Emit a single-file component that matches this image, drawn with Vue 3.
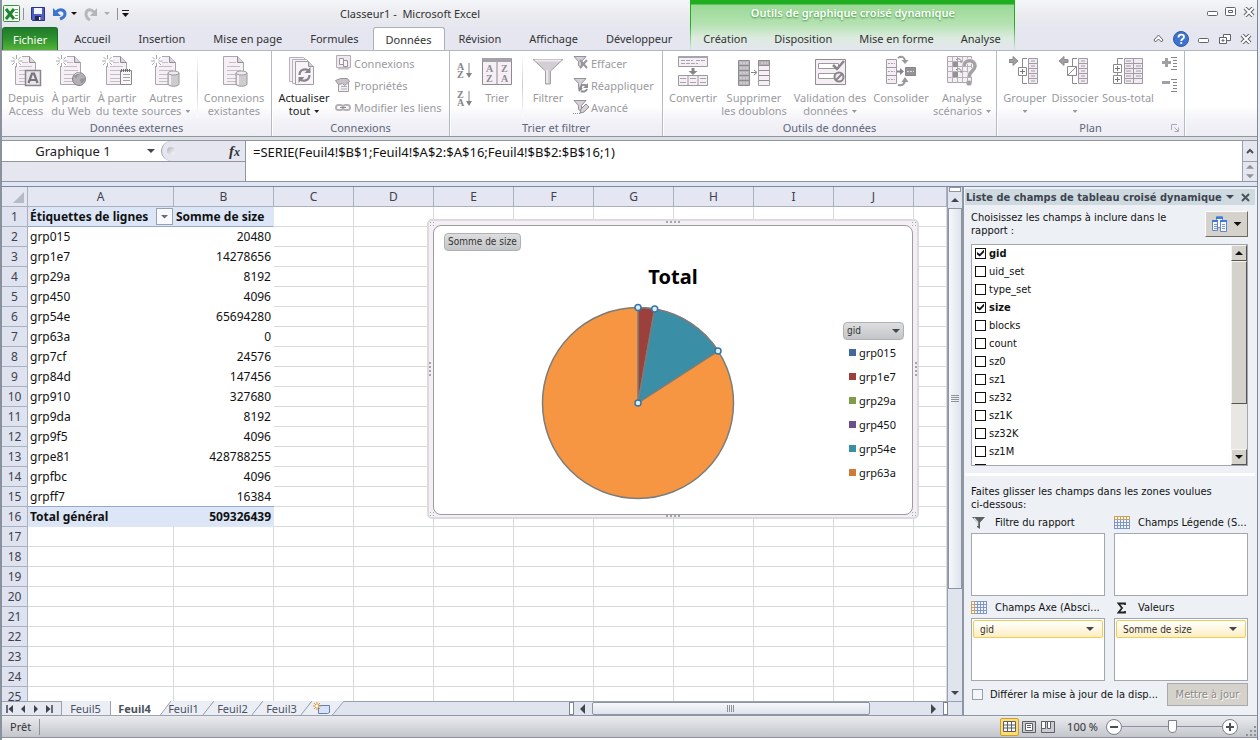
<script setup>
import { ref } from 'vue'

const page = '<path d="M5.500 1.500h14l6 6v22h-20z" fill="#f6f0f6" stroke="#aaa6ac"/><path d="M19.500 1.500v6h6" fill="#d9d4db" stroke="#8f8c92"/><path d="M11 7.500h7M9 11.500h13M9 15.500h14M9 19.500h14M9 23.500h14M9 26.500h14" stroke="#c4bfc7"/>'
const spark = '<rect x="2" y="1" width="10" height="10" fill="#fff"/><path d="M6.500 0v4M6.500 8v4M1 6h4M8.500 6h4M2.500 2l2.500 2.500M8.500 7.500l2.500 2.500M10.500 2L8.500 4.500M4.500 7.500L2 10" stroke="#a9a6ab"/>'
const can = '<path d="M18 18v11c0 3 11 3 11 0v-11z" fill="#cfccd0" stroke="#9b989d"/><path d="M20 19v10.500" stroke="#f3f0f3" stroke-width="2"/><ellipse cx="23.500" cy="18" rx="5.500" ry="2" fill="#eeeaee" stroke="#9b989d"/>'
const tableGrid = '<path d="M19.500 3.500h9v25h-9z" fill="#f2e9f2" stroke="#a09ca3"/><path d="M20 8.500h8M20 13.500h8M20 18.500h8M20 23.500h8M22 6h4M22 11h4M22 16h4M22 21h4M22 26h4" stroke="#a09ca3"/>'
const funnelSmall = '<path d="M1 1.500h12L8.500 6.500v6l-3-2v-4z" fill="#d5d0d6" stroke="#949197"/>'

const icons = {
  access: page + spark + '<path d="M15.500 15.500h15v15h-15z" fill="#e9e5ea" stroke="#89868b" stroke-width="1.500"/><path d="M18.500 28L22 18.500h2L27.500 28M20 25h6" fill="none" stroke="#77747a" stroke-width="2.200"/>',
  web: page + spark + '<circle cx="24" cy="24" r="6.500" fill="#b4b1b6" stroke="#858288"/><path d="M19 21c2-3 4-3 6-2-1 2-3 1-3 3s-2 1-3-1zM25 25c1-2 3-2 5-1-1 3-3 5-4 4z" fill="#96939a"/><path d="M20 20c2-2 4-2 5-2" fill="none" stroke="#e4e1e6"/>',
  text: page + spark + '<path d="M19.500 15.500h11v14h-11z" fill="#faf7fa" stroke="#89868b"/><path d="M20 15.500h10" stroke="#6f6c72" stroke-width="3" stroke-dasharray="1 1"/><path d="M22 19.500h7M22 22.500h7M22 25.500h7" stroke="#a7a4a9"/>',
  other: page + spark + can,
  existing: page + can,
  refresh: '<path d="M1.500 2.500h14l3 3v21h-17z" fill="#f6f0f6" stroke="#b6b2b8"/><path d="M4.500 4.500h14l3 3v21h-17z" fill="#f6f0f6" stroke="#b6b2b8"/><path d="M7.500 6.500h13l5 5v18h-18z" fill="#f8f3f8" stroke="#a19ea4"/><path d="M20.500 6.500v5h5" fill="#d4cfd6" stroke="#99959b"/><path d="M11.500 20c0-6 7-7 9.500-4M21.500 20c0 6-7 7-9.500 4" fill="none" stroke="#88858b" stroke-width="2.200"/><path d="M22.500 12v6h-6zM10.500 28v-6h6z" fill="#88858b"/>',
  sort: '<path d="M1.500 3.500h29v26h-29z" fill="#f6eff6" stroke="#8e8b90"/><path d="M1.500 3h29v4h-29z" fill="#a6a3a8"/><path d="M16 7v22" stroke="#8e8b90"/><g fill="#8e8b90" font-family="Liberation Serif, serif" font-weight="700" font-size="10"><text x="5" y="17">A</text><text x="5" y="27">Z</text><text x="20" y="17">Z</text><text x="20" y="27">A</text></g>',
  filter: '<path d="M1 4.500h30L18.500 16v13h-5V16z" fill="#d2ced3" stroke="#a29fa4"/><path d="M2 4.500h28l-2 2H4z" fill="#eeeaee"/><path d="M15 15v13" stroke="#f3f0f3" stroke-width="1.500"/>',
  convert: '<path d="M1.500 1.500h29v10h-29z" fill="#f5eef5" stroke="#9c999f"/><path d="M1 2h30" stroke="#a8a5aa" stroke-width="2"/><path d="M4 5.500h12M19 5.500h9M4 8.500h17" stroke="#a8a5aa" stroke-dasharray="4 1"/><path d="M14.500 13h3v3h3l-4.500 4-4.500-4h3z" fill="#88858a"/><path d="M1.500 20.500h29v10h-29zM11 20.500v10M21 20.500v10" fill="#f5eef5" stroke="#9c999f"/><path d="M3 23.500h6M13 23.500h6M23 23.500h6M3 27.500h6M13 27.500h6M23 27.500h6" stroke="#a8a5aa"/>',
  dedupe: '<path d="M0.500 5.500h11v25h-11z" fill="#b9b5bb" stroke="#8f8c91"/><path d="M20.500 5.500h11v25h-11z" fill="#f6eff6" stroke="#a3a0a5"/><path d="M20.500 5.500h11v5h-11z" fill="#b4b1b6" stroke="#8f8c91"/><path d="M1 10.500h11M1 15.500h11M1 20.500h11M1 25.500h11M21 15.500h10M21 20.500h10M21 25.500h10" stroke="#8f8c91"/><path d="M2 8h8M2 13h8M2 18h8M2 23h8M2 28h8M23 8h7" stroke="#e3e0e4" stroke-dasharray="2 1"/><path d="M13 17.500h5M16 15l3 2.500-3 2.500" fill="none" stroke="#858288"/>',
  validate: '<path d="M1.500 4.500h30v25h-30z" fill="#f5eef5" stroke="#8f8c92"/><path d="M4.500 8.500h20v5h-20zM4.500 18.500h20v5h-20z" fill="#fff" stroke="#9d9aa0"/><path d="M19 10l4 4 7-8" fill="none" stroke="#89868b" stroke-width="2.500"/><circle cx="25" cy="22" r="4.500" fill="#f3edf3" stroke="#89868b" stroke-width="2"/><path d="M22 25l6-6" stroke="#89868b" stroke-width="2"/>',
  consolidate: '<path d="M1.500 4.500h10v24h-10zM1.500 12.500h10M1.500 20.500h10" fill="#f5eef5" stroke="#a09da2"/><path d="M3 8.500h7M3 16.500h7M3 24.500h7" stroke="#a8a5aa" stroke-dasharray="2 1"/><path d="M20.500 12.500h10v8h-10z" fill="#969398" stroke="#88858a"/><path d="M22 16.500h7" stroke="#ddd" stroke-dasharray="2 1"/><path d="M12 16.500h4" stroke="#88858a" stroke-width="2"/><path d="M15 13l4 3.500-4 3.500z" fill="#88858a"/><path d="M13 3c4-3 7 0 7 3M13 30c4 1 7-1 7-5" fill="none" stroke="#9a979c" stroke-width="2"/><path d="M16.500 5h7L20 9zM16.500 27h7L20 22z" fill="#9a979c"/>',
  analysis: '<path d="M1.500 1.500h24v26h-24z" fill="#f5eef5" stroke="#aaa7ac"/><path d="M1.500 6.500h24M1.500 11.500h24M1.500 16.500h24M1.500 22.500h24M6.500 1.500v26M11.500 1.500v26M16.500 1.500v26M21.500 1.500v26" stroke="#b7b4b9"/><path d="M7 7h5v5H7zM7 17h5v5H7z" fill="#949196"/><path d="M10 5c3-3 6 0 5 3M10 15c3-3 6 0 5 3" fill="none" stroke="#88858a"/><path d="M18 11c0-7 11-7 11 0 0 5-6 5-6 11" fill="none" stroke="#f7f3f7" stroke-width="5"/><path d="M18 11c0-7 11-7 11 0 0 5-6 5-6 11" fill="none" stroke="#a4a1a6" stroke-width="3.500"/><circle cx="23" cy="28" r="2.600" fill="#a4a1a6"/>',
  group: '<path d="M0 4.500h4v-3l5 4.500-5 4.500v-3H0z" fill="#a29fa4" stroke="#8d8a8f"/><path d="M18 3.500h-4.500v25H18" fill="none" stroke="#8d8a8f"/><path d="M9.500 12.500h8v8h-8z" fill="#fff" stroke="#8d8a8f"/><path d="M11 16.500h5M13.500 14v5" stroke="#77747a"/>' + tableGrid,
  ungroup: '<path d="M9 4.500H5v-3L0 6l5 4.500v-3h4z" fill="#a29fa4" stroke="#8d8a8f"/><path d="M18 3.500h-4.500v25H18" fill="none" stroke="#8d8a8f"/><path d="M8.500 11.500h9v9h-9zM8.500 20.500l9-9" fill="#fff" stroke="#8d8a8f"/>' + tableGrid,
  subtotal: '<path d="M12.500 3.500h18v25h-18z" fill="#f2e9f2" stroke="#a09ca3"/><path d="M21.500 3.500v25M12.500 8.500h18M12.500 13.500h18M12.500 18.500h18M12.500 23.500h18M14 6h5M14 11h5M14 16h5M14 21h5M14 26h5M24 11h5M24 16h5M24 21h5" stroke="#a09ca3"/><path d="M11 3.500H5.500V9M5.500 17v4" fill="none" stroke="#8d8a8f"/><path d="M1.500 9.500h8v8h-8zM1.500 20.500h8v8h-8z" fill="#fff" stroke="#8d8a8f"/><path d="M3 13.500h5M5.500 11v5M3 24.500h5M5.500 22v5" stroke="#77747a"/>',
}
const smallIcons = {
  connections: '<path d="M1.500 .5h14v12h-14z" fill="#eee9ee" stroke="#b2afb4"/><path d="M4.500 3.500h4v6h-4zM8.500 5.500h4v6h-4z" fill="#f7f3f7" stroke="#99969b"/><path d="M3 13.500h11" stroke="#c5c2c7" stroke-width="2"/>',
  properties: '<path d="M3.500 5.500h10v9h-10z" fill="#f4eff4" stroke="#a09da2"/><path d="M6 9.500h6M6 12h6" stroke="#b0adb2"/><path d="M.5 3.500l5-2h7l2 3-5 4-2-2-4 1z" fill="#c6c3c8" stroke="#98959a"/>',
  links: '<rect x="1" y="6" width="7" height="5" rx="2.500" fill="none" stroke="#b5b2b7" stroke-width="2"/><rect x="8" y="6" width="7" height="5" rx="2.500" fill="none" stroke="#b5b2b7" stroke-width="2"/><path d="M5 8.500h6" stroke="#918e93"/>',
  clear: funnelSmall + '<path d="M7 5l7 8M14 5l-7 8" stroke="#9a979c" stroke-width="2"/>',
  reapply: funnelSmall + '<path d="M7 12c1-5 5-5 7-3M14 12c-1 3-4 3-6 2" fill="none" stroke="#8f8c91" stroke-width="2"/><path d="M15 6v5h-5zM5 11h5l-4 4z" fill="#8f8c91"/>',
  advanced: funnelSmall + '<path d="M7 14l1-4 5-5 3 3-5 5z" fill="#d6d2d7" stroke="#8f8c91"/><path d="M0 14.500h8" stroke="#8f8c91" stroke-dasharray="1 1"/>',
}

const dataTools = [
  { icon: 'convert', lines: ['Convertir'], size: 'w56' },
  { icon: 'dedupe', lines: ['Supprimer', 'les doublons'], size: 'w66' },
  { icon: 'validate', lines: ['Validation des', 'données'], arrow: true, size: 'w86' },
  { icon: 'consolidate', lines: ['Consolider'], size: 'w56' },
  { icon: 'analysis', lines: ['Analyse', 'scénarios'], arrow: true, size: 'w66' },
]
const external = [
  { icon: 'access', lines: ['Depuis', 'Access'], size: 'w44' },
  { icon: 'web', lines: ['À partir', 'du Web'], size: 'w46' },
  { icon: 'text', lines: ['À partir', 'du texte'], size: 'w46' },
  { icon: 'other', lines: ['Autres', 'sources'], arrow: true, size: 'w52' },
]
const outline = [
  { icon: 'group', lines: ['Grouper', ''], arrow: true, size: 'w50' },
  { icon: 'ungroup', lines: ['Dissocier', ''], arrow: true, size: 'w50' },
  { icon: 'subtotal', lines: ['Sous-total'], size: 'w56' },
]
const tabs = ['Accueil', 'Insertion', 'Mise en page', 'Formules', 'Données', 'Révision', 'Affichage', 'Développeur']
const chartTabs = ['Création', 'Disposition', 'Mise en forme', 'Analyse']

const columns = ['A', 'B', 'C', 'D', 'E', 'F', 'G', 'H', 'I', 'J', '']
const data = [
  ['Étiquettes de lignes', 'Somme de size'],
  ['grp015', '20480'], ['grp1e7', '14278656'], ['grp29a', '8192'], ['grp450', '4096'],
  ['grp54e', '65694280'], ['grp63a', '0'], ['grp7cf', '24576'], ['grp84d', '147456'],
  ['grp910', '327680'], ['grp9da', '8192'], ['grp9f5', '4096'], ['grpe81', '428788255'],
  ['grpfbc', '4096'], ['grpff7', '16384'], ['Total général', '509326439'],
]
const legend = [
  ['grp015', 'blue'], ['grp1e7', 'red'], ['grp29a', 'green'],
  ['grp450', 'purple'], ['grp54e', 'teal'], ['grp63a', 'orange'],
]
const fields = ref([
  { name: 'gid', on: true }, { name: 'uid_set', on: false }, { name: 'type_set', on: false },
  { name: 'size', on: true }, { name: 'blocks', on: false }, { name: 'count', on: false },
  { name: 'sz0', on: false }, { name: 'sz1', on: false }, { name: 'sz32', on: false },
  { name: 'sz1K', on: false }, { name: 'sz32K', on: false }, { name: 'sz1M', on: false },
  { name: '', on: false },
])
const nameBox = ref('Graphique 1')
const formula = ref('=SERIE(Feuil4!$B$1;Feuil4!$A$2:$A$16;Feuil4!$B$2:$B$16;1)')
const zoom = ref(50)
const defer = ref(false)
const sheets = ['Feuil5', 'Feuil4', 'Feuil1', 'Feuil2', 'Feuil3']
</script>

<template>
  <div class="app">
    <header class="top">
      <div class="titlebar">
        <div class="quick">
          <svg class="xl" width="18" height="18" viewBox="0 0 18 18"><rect x=".5" y=".5" width="16" height="16" rx="1" fill="#e9f5e6" stroke="#3c8f3c" /><path d="M10 1h6v15h-6z" fill="#fff" /><path d="M12 4.500h3M12 7.500h3M12 10.500h3M12 13.500h3" stroke="#5aa95a" /><path d="M3 4l8 10M11 4L3 14" stroke="#1e8230" stroke-width="3" /></svg>
          <span class="bar"></span>
          <button class="plain" aria-label="Enregistrer"><svg width="14" height="14" viewBox="0 0 14 14"><path d="M.5 .5h13v13h-12l-1-1z" fill="#4f5fc4" stroke="#2b3385" /><path d="M3 1h8v6H3z" fill="#f3f5fd" /><path d="M4 9h6v4H4z" fill="#23275c" /><path d="M8 10h1.500v3H8z" fill="#fff" /></svg></button>
          <button class="plain undo" aria-label="Annuler"><svg width="14" height="14" viewBox="0 0 14 14"><path d="M3 5c4-4 9-2 9 2 0 3-2 4-5 5" fill="none" stroke="#3b74cf" stroke-width="3" /><path d="M0 1v8h8z" fill="#3b74cf" /></svg></button>
          <i class="tri dark"></i>
          <button class="plain redo" aria-label="Répéter"><svg width="14" height="14" viewBox="0 0 14 14"><path d="M10 5C6 1 2 3 2 7c0 3 2 5 4 6" fill="none" stroke="#b6b8bc" stroke-width="3" /><path d="M13 1v8H6z" fill="#b2b5b9" /></svg></button>
          <i class="tri grey"></i>
          <span class="bar last"></span>
          <svg width="7" height="8" viewBox="0 0 7 8"><path d="M0 .5h7" stroke="#222" /><path d="M0 3h7L3.500 7z" fill="#111" /></svg>
        </div>
        <h1>Classeur1 -&nbsp; Microsoft Excel</h1>
        <div class="winbtns">
          <button class="plain" aria-label="Réduire"><svg width="12" height="10" viewBox="0 0 12 10"><rect x=".5" y="4.500" width="10" height="4" rx="1" fill="#fff" stroke="#5e636d" /></svg></button>
          <button class="plain" aria-label="Restaurer"><svg width="12" height="10" viewBox="0 0 12 10"><rect x=".5" y=".5" width="10" height="8" rx="1" fill="#fff" stroke="#5e636d" /><path d="M3.500 3.500h4v2h-4z" fill="#fff" stroke="#5e636d" /></svg></button>
          <button class="plain" aria-label="Fermer"><svg width="12" height="10" viewBox="0 0 12 10"><path d="M2 1l8 8M10 1L2 9" stroke="#5e636d" stroke-width="4" /><path d="M2 1l8 8M10 1L2 9" stroke="#fff" stroke-width="2" /></svg></button>
        </div>
      </div>
      <nav class="tabs">
        <button class="file">Fichier</button>
        <button v-for="t in tabs" :key="t" class="tab" :class="{ active: t === 'Données' }">{{ t }}</button>
        <div class="context">
          <div class="ctitle">Outils de graphique croisé dynamique</div>
          <button v-for="t in chartTabs" :key="t" class="tab">{{ t }}</button>
        </div>
        <div class="tabtools">
          <button class="plain" aria-label="Réduire le ruban"><svg width="11" height="9" viewBox="0 0 11 9"><path d="M1 6l4.500-5L10 6l-1.500 2-3-3-3 3z" fill="#fff" stroke="#5e636d" /></svg></button>
          <button class="plain" aria-label="Aide"><svg width="16" height="16" viewBox="0 0 16 16"><circle cx="8" cy="8" r="7.500" fill="#3d73cf" stroke="#2d58a8" /><path d="M5.500 6.500c0-4 5.500-3.500 5.500-.5 0 2-2.800 2-2.800 4" fill="none" stroke="#fff" stroke-width="1.800" /><circle cx="8.200" cy="12" r="1.100" fill="#fff" /></svg></button>
          <button class="plain" aria-label="Réduire le classeur"><svg width="12" height="10" viewBox="0 0 12 10"><rect x=".5" y="4.500" width="10" height="4" rx="1" fill="#fff" stroke="#5e636d" /></svg></button>
          <button class="plain" aria-label="Restaurer le classeur"><svg width="12" height="12" viewBox="0 0 12 12"><path d="M4.500 1.500h7v6h-7z" fill="#fff" stroke="#5e636d" /><path d="M.5 4.500h7v6h-7zM3 7h2v1H3z" fill="#fff" stroke="#5e636d" /></svg></button>
          <button class="plain" aria-label="Fermer le classeur"><svg width="12" height="10" viewBox="0 0 12 10"><path d="M2 1l8 8M10 1L2 9" stroke="#5e636d" stroke-width="4" /><path d="M2 1l8 8M10 1L2 9" stroke="#fff" stroke-width="2" /></svg></button>
        </div>
      </nav>
    </header>

    <section class="ribbon">
      <div class="rgroup g-ext">
        <div class="rbody">
          <button v-for="b in external" :key="b.icon" class="big" :class="b.size">
            <svg width="32" height="32" viewBox="0 0 32 32" v-html="icons[b.icon]"></svg>
            <span v-for="(l, i) in b.lines" :key="i">{{ l }}<i v-if="b.arrow && i === 1" class="tri mini"></i></span>
          </button>
          <span class="rsep"></span>
          <button class="big w68">
            <svg width="32" height="32" viewBox="0 0 32 32" v-html="icons.existing"></svg>
            <span>Connexions</span><span>existantes</span>
          </button>
        </div>
        <div class="rlabel">Données externes</div>
      </div>
      <div class="rgroup g-con">
        <div class="rbody">
          <button class="big w56 enabled">
            <svg width="32" height="32" viewBox="0 0 32 32" v-html="icons.refresh"></svg>
            <span>Actualiser</span><span>tout<i class="tri mini"></i></span>
          </button>
          <div class="smalls">
            <button><svg width="16" height="16" viewBox="0 0 16 16" v-html="smallIcons.connections"></svg>Connexions</button>
            <button><svg width="16" height="16" viewBox="0 0 16 16" v-html="smallIcons.properties"></svg>Propriétés</button>
            <button><svg width="16" height="16" viewBox="0 0 16 16" v-html="smallIcons.links"></svg>Modifier les liens</button>
          </div>
        </div>
        <div class="rlabel">Connexions</div>
      </div>
      <div class="rgroup g-sort">
        <div class="rbody">
          <div class="azcol">
            <button class="plain az" aria-label="Trier de A à Z"><span>A<br>Z</span><svg width="6" height="16" viewBox="0 0 6 16"><path d="M3 0v12" stroke="#858288" /><path d="M0 10h6l-3 5z" fill="#858288" /></svg></button>
            <button class="plain az" aria-label="Trier de Z à A"><span>Z<br>A</span><svg width="6" height="16" viewBox="0 0 6 16"><path d="M3 0v12" stroke="#858288" /><path d="M0 10h6l-3 5z" fill="#858288" /></svg></button>
          </div>
          <button class="big w44"><svg width="32" height="32" viewBox="0 0 32 32" v-html="icons.sort"></svg><span>Trier</span></button>
          <span class="rsep"></span>
          <button class="big w46"><svg width="32" height="32" viewBox="0 0 32 32" v-html="icons.filter"></svg><span>Filtrer</span></button>
          <div class="smalls tight">
            <button><svg width="16" height="16" viewBox="0 0 16 16" v-html="smallIcons.clear"></svg>Effacer</button>
            <button><svg width="16" height="16" viewBox="0 0 16 16" v-html="smallIcons.reapply"></svg>Réappliquer</button>
            <button><svg width="16" height="16" viewBox="0 0 16 16" v-html="smallIcons.advanced"></svg>Avancé</button>
          </div>
        </div>
        <div class="rlabel">Trier et filtrer</div>
      </div>
      <div class="rgroup g-tools">
        <div class="rbody">
          <button v-for="b in dataTools" :key="b.icon" class="big" :class="b.size">
            <svg width="32" height="32" viewBox="0 0 32 32" v-html="icons[b.icon]"></svg>
            <span v-for="(l, i) in b.lines" :key="i">{{ l }}<i v-if="b.arrow && i === 1" class="tri mini"></i></span>
          </button>
        </div>
        <div class="rlabel">Outils de données</div>
      </div>
      <div class="rgroup g-plan">
        <div class="rbody">
          <button v-for="b in outline" :key="b.icon" class="big" :class="b.size">
            <svg width="32" height="32" viewBox="0 0 32 32" v-html="icons[b.icon]"></svg>
            <span v-for="(l, i) in b.lines" :key="i">{{ l }}<i v-if="b.arrow && i === 1" class="tri mini alone"></i></span>
          </button>
          <div class="details">
            <button class="plain" aria-label="Afficher les détails"><svg width="16" height="14" viewBox="0 0 16 14"><path d="M3 1h3v3h3v3H6v3H3V7H0V4h3z" fill="#a29fa4" /><path d="M9 .5h6M11 3.500h4M11 6.500h4M11 9.500h4M9 12.500h6" stroke="#88858a" /></svg></button>
            <button class="plain" aria-label="Masquer"><svg width="16" height="14" viewBox="0 0 16 14"><path d="M0 2h8v3H0z" fill="#a29fa4" /><path d="M9 .5h6M11 3.500h4M11 6.500h4M11 9.500h4M9 12.500h6" stroke="#88858a" /></svg></button>
          </div>
        </div>
        <div class="rlabel">Plan<svg class="launch" width="8" height="8" viewBox="0 0 8 8"><path d="M.5 6V.5H6M3.500 3.500L7 7M7.500 3.500v4h-4" fill="none" stroke="#a7abb3" /></svg></div>
      </div>
    </section>

    <section class="fbar">
      <div class="fleft">
        <div class="fname">
          <input v-model="nameBox" aria-label="Zone Nom">
          <i class="tri namearrow"></i>
          <div class="knob"><i></i><span class="fx">f<small>x</small></span></div>
        </div>
      </div>
      <textarea v-model="formula" class="formula" aria-label="Barre de formule" spellcheck="false"></textarea>
      <div class="fscroll">
        <button class="plain" aria-label="Réduire la barre"><svg width="8" height="6" viewBox="0 0 8 6"><path d="M1 5l3-3 3 3" fill="none" stroke="#4c515a" stroke-width="2" /></svg></button>
        <div class="spins"><i class="tri up"></i><i class="tri"></i></div>
      </div>
    </section>

    <main class="work">
      <div class="book">
        <div class="gridrow">
          <div class="sheet">
            <table>
              <colgroup><col class="c-head"><col class="c-a"><col class="c-b"><col v-for="n in 8" :key="n" class="c-n"><col></colgroup>
              <thead>
                <tr><th class="corner"><svg width="11" height="11" viewBox="0 0 11 11"><path d="M11 0v11H0z" fill="#b4bac6" /></svg></th><th v-for="(c, i) in columns" :key="i">{{ c }}</th></tr>
              </thead>
              <tbody>
                <tr v-for="r in 25" :key="r" :class="{ headrow: r === 1, totalrow: r === 16, pivot: r <= 16 }">
                  <th>{{ r }}</th>
                  <td class="ca">{{ data[r - 1]?.[0] }}<button v-if="r === 1" class="dd" aria-label="Filtrer les étiquettes"><i class="tri"></i></button></td>
                  <td class="cb">{{ data[r - 1]?.[1] }}</td>
                  <td v-for="n in 9" :key="n"></td>
                </tr>
              </tbody>
            </table>
            <div class="chart">
              <div class="plot">
                <button class="fieldbtn">Somme de size</button>
                <h2>Total</h2>
                <svg class="pie" width="200" height="200" viewBox="0 0 200 200">
                  <circle cx="100" cy="100" r="95.500" fill="#f79642" stroke="#7b7d7a" stroke-width="1.500" />
                  <path d="M100 100V4.500A95.500 95.500 0 0 1 116.700 6z" fill="#9b403b" stroke="#7b7d7a" stroke-width="1.500" />
                  <path d="M100 100L116.700 6A95.500 95.500 0 0 1 180.200 48z" fill="#3a8ea6" stroke="#7b7d7a" stroke-width="1.500" />
                  <g fill="#d3f2fb" stroke="#3a73a8" stroke-width="1.500"><circle cx="100" cy="4.500" r="3" /><circle cx="116.700" cy="6" r="3" /><circle cx="180" cy="48" r="3" /><circle cx="100" cy="100" r="3" /></g>
                </svg>
                <div class="legend">
                  <button class="fieldbtn gid">gid<i class="tri"></i></button>
                  <ul><li v-for="l in legend" :key="l[0]"><i :class="l[1]"></i>{{ l[0] }}</li></ul>
                </div>
              </div>
              <i class="grip t"></i><i class="grip b"></i><i class="grip v l"></i><i class="grip v r"></i>
              <i class="dots tl"></i><i class="dots tr"></i><i class="dots bl"></i><i class="dots br"></i>
            </div>
          </div>
          <div class="vscroll">
            <i class="split"></i>
            <i class="tri up"></i>
            <div class="vthumb"><i></i></div>
            <i class="tri"></i>
          </div>
        </div>
        <div class="bottom">
          <div class="navs">
            <button class="plain" aria-label="Première"><svg width="8" height="8" viewBox="0 0 8 8"><path d="M1 0v8" stroke="#3d434e" stroke-width="1.500" /><path d="M7 0v8L2.500 4z" fill="#3d434e" /></svg></button>
            <button class="plain" aria-label="Précédente"><svg width="8" height="8" viewBox="0 0 8 8"><path d="M6 0v8L2 4z" fill="#3d434e" /></svg></button>
            <button class="plain" aria-label="Suivante"><svg width="8" height="8" viewBox="0 0 8 8"><path d="M2 0v8l4-4z" fill="#3d434e" /></svg></button>
            <button class="plain" aria-label="Dernière"><svg width="8" height="8" viewBox="0 0 8 8"><path d="M7 0v8" stroke="#3d434e" stroke-width="1.500" /><path d="M1 0v8l4.500-4z" fill="#3d434e" /></svg></button>
          </div>
          <div class="sheettabs">
            <button v-for="(s, i) in sheets" :key="s" class="stab" :class="{ current: i === 1 }">
              <svg width="62" height="15" viewBox="0 0 62 15"><path :d="i < 2 ? 'M.500 0V14.500H50L61 0' : 'M12 0L.500 14.500H50L61 0'" :fill="i === 1 ? '#fff' : '#eceef5'" stroke="#9aa2b0" /></svg>
              <span>{{ s }}</span>
            </button>
            <button class="stab new" aria-label="Insérer une feuille">
              <svg width="62" height="15" viewBox="0 0 62 15"><path d="M12 0L.500 14.500H32L44 0" fill="#eceef5" stroke="#9aa2b0" /><path d="M18.500 4.500h11v7l-2 1h-9z" fill="#d5e2f8" stroke="#6a80b5" /><path d="M17 1v8M13 5h8M14 2l6 6M20 2l-6 6" stroke="#e2932c" /><circle cx="17" cy="5" r="1.500" fill="#fff" /></svg>
            </button>
          </div>
          <div class="hscroll">
            <i class="hsplit"></i>
            <svg width="8" height="10" viewBox="0 0 8 10"><path d="M6 0v10L1 5z" fill="#42464e" /></svg>
            <div class="htrack"><div class="hthumb"><i></i></div></div>
            <svg width="8" height="10" viewBox="0 0 8 10"><path d="M1 0v10l5-5z" fill="#42464e" /></svg>
            <i class="hsplit"></i>
          </div>
        </div>
      </div>

      <aside class="panel">
        <div class="ptitle"><strong>Liste de champs de tableau croisé dynamique</strong><i class="tri"></i><button class="plain" aria-label="Fermer le volet"><svg width="9" height="9" viewBox="0 0 9 9"><path d="M1 1l7 7M8 1L1 8" stroke="#4d545e" stroke-width="2" /></svg></button></div>
        <div class="pbody">
          <div class="choose">
            <p>Choisissez les champs à inclure dans le rapport :</p>
            <button class="layoutbtn" aria-label="Disposition du volet">
              <svg width="15" height="16" viewBox="0 0 15 16"><path d="M4.500 .5h6v11h-6z" fill="#fff" stroke="#6a93dd" /><path d="M4 1h7v2H4z" fill="#3f78dd" /><path d="M.5 4.500h5v10h-5zM8.500 4.500h6v11h-6z" fill="#f5f9ff" stroke="#5d85cf" /><path d="M0 5h6M8 5h7" stroke="#3f78dd" stroke-width="2" /><path d="M2 8.500h3M2 10.500h3M2 12.500h3M10 8.500h3M10 10.500h3M10 12.500h3" stroke="#7f95bd" /></svg>
              <i class="tri black"></i>
            </button>
          </div>
          <div class="fieldbox">
            <ul>
              <li v-for="(f, i) in fields" :key="i"><label :class="{ on: f.on }"><input v-model="f.on" type="checkbox">{{ f.name }}</label></li>
            </ul>
            <div class="lscroll"><b><i class="tri up"></i></b><div class="lthumb"></div><span></span><b><i class="tri"></i></b></div>
          </div>
        </div>
        <div class="pdiv"></div>
        <div class="pbody zones">
          <p>Faites glisser les champs dans les zones voulues<br>ci-dessous:</p>
          <div class="zonegrid">
            <section>
              <h3><svg width="16" height="14" viewBox="0 0 16 14"><path d="M1 1h13L9 6.500V13l-3-2V6.500z" fill="#5d5f63" /><path d="M3 2l3.500 4v4" fill="none" stroke="#e0e0e2" stroke-width="1.500" /></svg>Filtre du rapport</h3>
              <div class="drop"></div>
            </section>
            <section>
              <h3><svg width="16" height="13" viewBox="0 0 16 13"><path d="M0 0h16v13H0z" fill="#7d97c8" /><path d="M0 0h16v4H0z" fill="#c9a15c" /><path d="M1 2h15M1 5h15M1 8h15M1 11h15" stroke="#f2f5fc" stroke-width="2" stroke-dasharray="2 1" /></svg>Champs Légende (S...</h3>
              <div class="drop"></div>
            </section>
            <section>
              <h3><svg width="16" height="13" viewBox="0 0 16 13"><path d="M0 0h16v13H0z" fill="#7d97c8" /><path d="M0 0h4v13H0z" fill="#c9a15c" /><path d="M1 2h15M1 5h15M1 8h15M1 11h15" stroke="#f2f5fc" stroke-width="2" stroke-dasharray="2 1" /></svg>Champs Axe (Absci...</h3>
              <div class="drop"><button class="chip">gid<i class="tri"></i></button></div>
            </section>
            <section>
              <h3><svg width="16" height="14" viewBox="0 0 16 14"><path d="M11 4V2.500H4.500L8 7l-3.500 4.500H11V10" fill="none" stroke="#222" stroke-width="1.800" /></svg>Valeurs</h3>
              <div class="drop"><button class="chip">Somme de size<i class="tri"></i></button></div>
            </section>
          </div>
          <div class="update">
            <label><input v-model="defer" type="checkbox">Différer la mise à jour de la disp...</label>
            <button disabled>Mettre à jour</button>
          </div>
        </div>
      </aside>
    </main>

    <footer class="status">
      <span class="ready">Prêt</span>
      <div class="views">
        <button class="plain sel" aria-label="Normal"><svg width="13" height="11" viewBox="0 0 13 11"><path d="M.5 .5h12v10H.5zM.5 4h12M.5 7h12M4.500 .5v10M8.500 .5v10" fill="#fff" stroke="#5c5f66" /></svg></button>
        <button class="plain" aria-label="Mise en page"><svg width="14" height="12" viewBox="0 0 14 12"><path d="M.5 .5h13v11H.5z" fill="#c9ccd2" stroke="#5c5f66" /><path d="M3.500 2.500h7v7h-7zM5 4.500h4M5 6.500h4" fill="#fff" stroke="#5c5f66" /></svg></button>
        <button class="plain" aria-label="Aperçu des sauts de page"><svg width="14" height="12" viewBox="0 0 14 12"><path d="M.5 .5h13v11H.5z" fill="#c9ccd2" stroke="#5c5f66" /><path d="M.5 .5h4v7h-4zM6.500 .5h3v7h-3z" fill="#fff" stroke="#5c5f66" /></svg></button>
      </div>
      <span class="pct">100 %</span>
      <button class="plain round" aria-label="Zoom arrière"><svg width="16" height="16" viewBox="0 0 16 16"><circle cx="8" cy="8" r="7.500" fill="#fff" stroke="#7b818b" /><path d="M4 8h8" stroke="#4a4f58" stroke-width="2" /></svg></button>
      <input v-model="zoom" type="range" min="0" max="100" aria-label="Zoom">
      <button class="plain round" aria-label="Zoom avant"><svg width="16" height="16" viewBox="0 0 16 16"><circle cx="8" cy="8" r="7.500" fill="#fff" stroke="#7b818b" /><path d="M4 8h8M8 4v8" stroke="#4a4f58" stroke-width="2" /></svg></button>
      <svg class="grab" width="12" height="12" viewBox="0 0 12 12"><path d="M9 1h2v2H9zM5 5h2v2H5zM9 5h2v2H9zM1 9h2v2H1zM5 9h2v2H5zM9 9h2v2H9z" fill="#8c929c" /></svg>
    </footer>
  </div>
</template>

<style>
body { margin: 0; background: #e6ebf5; }
</style>

<style scoped>
* { box-sizing: border-box; }
.app { height: 100vh; display: flex; flex-direction: column; padding: 0 3px 2px 1px; font: 11px/13px "Noto Sans", "Open Sans", sans-serif; color: #333; background: linear-gradient(90deg, #8a929e 2px, #fff 2px, #fff calc(100% - 3px), #7f8896 calc(100% - 3px), #7f8896 calc(100% - 2px), #e6ebf5 calc(100% - 2px)); overflow: hidden; }
.app > * { margin-left: 1px; }
button, input, textarea { font: inherit; color: inherit; margin: 0; }
button { border: 0; background: none; padding: 0; white-space: nowrap; }
ul { list-style: none; margin: 0; padding: 0; }
h1, h2, h3, p { margin: 0; font: inherit; }
svg { display: block; flex: none; }
.tri { display: inline-block; width: 8px; height: 4px; background: #42464e; clip-path: polygon(0 0, 100% 0, 50% 100%); flex: none; }
.tri.up { clip-path: polygon(50% 0, 100% 100%, 0 100%); }
.tri.black { background: #111; }
.tri.dark { background: #111; width: 6px; height: 3px; }
.tri.grey { background: #aaadb2; width: 6px; height: 3px; }
.tri.mini { width: 5px; height: 3px; background: currentColor; margin-left: 4px; vertical-align: 2px; }
.tri.alone { margin-left: 0; }

.top { background: linear-gradient(#f4f6fa, #ececef 14px, #e5e6ef 28px); flex: none; }
.titlebar { height: 27px; display: flex; align-items: center; position: relative; }
.quick { display: flex; align-items: center; width: 328px; padding-left: 1px; }
.bar { width: 1px; height: 12px; background: #8d929b; margin: 0 7px 0 2px; }
.bar.last { margin: 0 4px 0 7px; }
.undo { margin: 0 4px 0 8px; }
.redo { margin: 0 6px 0 7px; }
h1 { width: 160px; text-align: center; white-space: nowrap; }
.winbtns { margin-left: auto; display: flex; gap: 6px; padding: 0 2px 3px 0; }
.tabs { display: flex; align-items: flex-end; height: 23px; }
.file { height: 23px; padding: 0 10px; color: #fff; background: linear-gradient(#1f7a2c, #2f922c 50%, #56b33c); border-radius: 3px 3px 0 0; border: 1px solid #15702a; border-bottom: 0; margin-right: 2px; }
.tab { height: 23px; padding: 0 14px; }
.tab.active { background: #fff; border: 1px solid #a8b0ba; border-bottom: 0; border-radius: 3px 3px 0 0; padding: 0 12px; }
.context { position: relative; width: 325px; height: 50px; padding-top: 27px; margin-left: 4px; display: flex; background: linear-gradient(#1fae20 4px, #9ad996 5px, #b4e2b1 24px, #dcebdf 38px, #e5e6ef 50px); }
.context .tab { padding: 0 14px 0 13px; }
.context::before, .context::after { content: ""; position: absolute; top: 0; bottom: 0; width: 1px; background: linear-gradient(#1fae20 50%, #d5ead8); }
.context::before { left: 0; }
.context::after { right: 0; }
.ctitle { position: absolute; top: 6px; left: 0; right: 0; text-align: center; color: #fff; font-weight: 600; text-shadow: 0 1px 2px #3c8f3c; white-space: nowrap; }
.tabtools { margin-left: auto; height: 23px; display: flex; align-items: center; gap: 9px; padding-right: 5px; }

.ribbon { display: flex; flex: none; height: 87px; border-top: 1px solid #b0b8c1; border-bottom: 1px solid #8f969f; background: linear-gradient(#fff 55px, #f2f2f8 70px, #eeedf3); color: #9a9a9e; }
.rgroup { display: flex; flex-direction: column; border-right: 1px solid #b5bac3; box-shadow: 1px 0 #fff; flex: none; }
.g-ext { width: 270px; }
.g-con { width: 178px; }
.g-sort { width: 213px; }
.g-tools { width: 334px; }
.g-plan { width: 188px; }
.rbody { display: flex; height: 69px; padding: 4px 0 0 2px; }
.g-con .rbody { padding-left: 4px; }
.g-sort .rbody { padding-left: 5px; }
.g-plan .rbody { padding-left: 3px; }
.big { display: flex; flex-direction: column; align-items: center; }
.big svg { margin-bottom: 4px; }
.big span { height: 13px; display: block; }
.enabled { color: #222; }
.w44 { width: 44px; } .w46 { width: 46px; } .w50 { width: 50px; } .w52 { width: 52px; } .w56 { width: 56px; }
.w66 { width: 66px; } .w68 { width: 68px; } .w86 { width: 86px; }
.rsep { width: 1px; height: 62px; margin: 0 2px 0 5px; background: linear-gradient(#fff, #c9ccd4 50%, #fff); }
.g-sort .rsep { margin-left: 3px; }
.smalls { display: flex; flex-direction: column; padding-left: 3px; margin-top: -3px; }
.smalls button { display: flex; align-items: center; gap: 3px; height: 22px; }
.smalls svg { width: 16px; }
.smalls.tight { padding-left: 2px; }
.smalls.tight button { gap: 2px; }
.azcol { width: 20px; display: flex; flex-direction: column; padding: 8px 0 0 2px; gap: 12px; }
.az { display: flex; gap: 2px; text-align: left; font: 700 10px/8px "Liberation Serif", serif; color: #858288; }
.details { display: flex; flex-direction: column; gap: 8px; padding: 2px 0 0 6px; }
.rlabel { height: 17px; line-height: 17px; text-align: center; color: #5d6577; position: relative; }
.launch { position: absolute; right: 5px; top: 5px; }

.fbar { display: flex; flex: none; height: 50px; padding-top: 3px; border-bottom: 1px solid #7f8896; background: linear-gradient(#dcdfe4 3px, #8f969f 3px, #8f969f 4px, #e5e6f0 4px, #e5e6f0 44px, #8f969f 44px, #8f969f 45px, #dfe6f5 45px); }
.fleft { width: 244px; padding-top: 1px; border-right: 1px solid #8f969f; height: 42px; flex: none; }
.fname { display: flex; align-items: center; height: 21px; background: #fff; border-bottom: 1px solid #8f969f; }
.fname input { width: 142px; border: 0; background: none; text-align: center; font-size: 13px; padding: 0; outline: 0; height: 20px; color: #222; }
.namearrow { margin: 0 6px 0 3px; }
.knob { flex: 1; height: 20px; display: flex; align-items: center; justify-content: space-between; background: #e5e6f0; border-left: 1px solid #9aa0ab; border-radius: 10px 0 0 10px; padding: 0 5px; }
.knob i { width: 8px; height: 8px; border-radius: 50%; background: linear-gradient(135deg, #aeb2ba, #fff); }
.fx { font: italic 700 15px/16px "Liberation Serif", serif; color: #333; }
.fx small { font-size: 12px; }
.formula { flex: 1; min-width: 0; border: 0; outline: 0; resize: none; height: 40px; margin-top: 1px; padding: 2px 7px; font-size: 13px; line-height: 18px; color: #111; background: #fff; overflow: hidden; }
.fscroll { width: 15px; margin-top: 1px; height: 40px; border-left: 1px solid #9aa0ab; display: flex; flex-direction: column; align-items: center; background: #e5e6f0; flex: none; }
.fscroll button { height: 20px; }
.spins { border-top: 1px solid #9aa0ab; width: 100%; flex: 1; display: flex; flex-direction: column; align-items: center; justify-content: space-around; }
.spins .tri { background: #8b9398; }

.work { flex: 1; min-height: 0; display: flex; }
.book { flex: 1; min-width: 0; display: flex; flex-direction: column; }
.gridrow { flex: 1; min-height: 0; display: flex; }
.sheet { flex: 1; min-width: 0; position: relative; overflow: hidden; background: #fff; border-right: 1px solid #9aa2b0; }
table { table-layout: fixed; border-collapse: separate; border-spacing: 0; width: 100%; font-size: 12px; line-height: 18px; color: #111; }
.c-head { width: 26px; } .c-a { width: 146px; } .c-b { width: 100px; } .c-n { width: 80px; }
th { font-weight: 400; color: #3d4250; background: #dfe3ef; border-right: 1px solid #a9b0c0; border-bottom: 1px solid #a9b0c0; padding: 0; height: 20px; }
thead th { background: #e4e6f1; }
.corner svg { margin: 2px 3px 0 auto; }
td { height: 20px; padding: 0 2px; border-right: 1px solid #d9dade; border-bottom: 1px solid #d9dade; overflow: hidden; white-space: nowrap; }
.pivot .ca, .pivot .cb { border-bottom-color: #fff; }
.pivot .ca { border-right: 0; }
.pivot .cb { text-align: right; border-right-color: #fff; }
.headrow .ca, .headrow .cb, .totalrow .ca, .totalrow .cb { font-weight: 700; background: #dde6f7; border-bottom-color: #95a9cc; border-right-color: #dde6f7; }
.headrow .cb { text-align: left; padding-left: 2px; }
.totalrow .ca, .totalrow .cb { border-bottom-color: #dde6f7; box-shadow: 0 -1px #95a9cc; }
.ca { position: relative; }
.dd { position: absolute; right: 1px; top: 1px; width: 17px; height: 17px; border: 1px solid #9aa2b0; background: #f7f9fc; display: grid; place-items: center; }
.dd .tri { background: #666c76; }

.chart { position: absolute; left: 425px; top: 32px; width: 492px; height: 300px; border: 2px solid #dcdadf; border-radius: 5px; background: #f3eff4; padding: 4px; }
.plot { position: relative; height: 290px; background: #fff; border: 1px solid #9b9ba0; border-radius: 8px; }
.fieldbtn { position: absolute; left: 10px; top: 7px; height: 18px; padding: 0 3px; border: 1px solid #aeb0b4; border-radius: 4px; background: linear-gradient(#dededf, #c4c5c8); font: 10px/14px "DejaVu Sans Condensed", "DejaVu Sans", sans-serif; color: #333; }
h2 { position: absolute; left: 0; right: 0; top: 39px; text-align: center; font: 700 20px/24px "Noto Sans", sans-serif; color: #000; }
.pie { position: absolute; left: 104px; top: 77px; }
.legend { position: absolute; left: 409px; top: 96px; width: 61px; }
.legend .gid { position: static; width: 61px; display: flex; align-items: center; justify-content: space-between; }
.legend ul { padding-left: 6px; }
.legend li { display: flex; align-items: center; gap: 3px; height: 24px; color: #111; }
.legend li i { width: 7px; height: 7px; }
.blue { background: #41699c; } .red { background: #9b403b; } .green { background: #7f9d49; } .purple { background: #6b4f8a; } .teal { background: #3a8ea6; } .orange { background: #cf7b38; }
.grip { position: absolute; width: 15px; height: 2px; background: repeating-linear-gradient(90deg, #a5a5aa 0 2px, transparent 2px 4px); }
.grip.t { top: 0; left: 237px; } .grip.b { bottom: 0; left: 237px; }
.grip.v { width: 2px; height: 15px; top: 141px; background: repeating-linear-gradient(#a5a5aa 0 2px, transparent 2px 4px); }
.grip.l { left: 0; } .grip.r { right: 0; }
.dots { position: absolute; width: 6px; height: 6px; background: radial-gradient(#a5a5aa 1px, transparent 1px) 0 0 / 3px 3px; }
.tl { top: 0; left: 0; } .tr { top: 0; right: 0; } .bl { bottom: 0; left: 0; } .br { bottom: 0; right: 0; }

.vscroll { width: 14px; flex: none; display: flex; flex-direction: column; align-items: center; background: #dfe4ef; padding-bottom: 6px; }
.split { width: 12px; height: 5px; border: 1px solid #8d95a3; background: #fff; margin-bottom: 6px; }
.vthumb { width: 14px; height: 381px; margin: 6px 0 auto; border: 1px solid #8d95a3; background: linear-gradient(90deg, #f5f7fb, #dfe3ec); display: grid; place-items: center; }
.vthumb i { width: 8px; height: 7px; background: repeating-linear-gradient(#8d929b 0 1px, transparent 1px 2px); }
.bottom { height: 15px; flex: none; display: flex; border-top: 1px solid #9aa2b0; background: #dfe4ef; border-bottom: 1px solid #8f96a6; }
.navs { width: 59px; display: flex; align-items: center; gap: 5px; padding-left: 4px; background: #e6e8f1; }
.sheettabs { display: flex; width: 508px; font: 11px/14px "Noto Sans", sans-serif; color: #4b5160; }
.stab { position: relative; width: 49px; height: 14px; z-index: 1; }
.stab svg { position: absolute; left: 0; top: -1px; }
.stab:nth-child(n+3) svg { left: -6px; }
.stab span { position: relative; }
.stab:nth-child(n+3) { z-index: 0; }
.current { z-index: 2; font-weight: 700; }
.new { z-index: 0; }
.hscroll { flex: 1; display: flex; align-items: center; gap: 5px; padding-right: 14px; }
.hsplit { width: 5px; height: 13px; border: 1px solid #7d8594; background: #fff; flex: none; }
.htrack { flex: 1; height: 13px; padding-right: 55px; }
.hthumb { height: 13px; border: 1px solid #8d95a3; border-radius: 2px; background: linear-gradient(#f5f7fb, #dfe3ec); display: grid; place-items: center; }
.hthumb i { width: 8px; height: 7px; background: repeating-linear-gradient(90deg, #8d929b 0 1px, transparent 1px 2px); }

.panel { width: 295px; flex: none; display: flex; flex-direction: column; border-left: 2px solid #8f96a4; border-bottom: 1px solid #8f96a4; background: #edf1f6; padding: 2px 2px 0 1px; font: 11px/13px "DejaVu Sans Condensed", "DejaVu Sans", sans-serif; color: #111; }
.ptitle { height: 16px; display: flex; align-items: center; background: #cfd9e0; padding: 0 5px 0 1px; color: #3d454f; white-space: nowrap; }
.ptitle .tri { margin: 0 7px 0 auto; }
.pbody { padding: 6px 7px 0 6px; }
.choose { display: flex; justify-content: space-between; height: 33px; }
.choose p { width: 200px; }
.layoutbtn { width: 43px; height: 26px; display: flex; align-items: center; justify-content: center; gap: 7px; background: #d5d2cb; border: 1px solid; border-color: #fff #6c6a66 #6c6a66 #fff; }
.fieldbox { display: flex; height: 222px; border: 1px solid #a3a8b0; background: #fff; overflow: hidden; }
.fieldbox ul { flex: 1; overflow: hidden; margin-top: -1px; }
.fieldbox li { height: 18px; }
.fieldbox label { display: flex; align-items: center; gap: 3px; height: 18px; padding-left: 3px; }
.fieldbox label.on { font-weight: 700; }
input[type="checkbox"] { appearance: none; width: 11px; height: 11px; border: 1px solid #111; background: #fff; flex: none; display: grid; place-items: center; }
input[type="checkbox"]:checked::before { content: ""; width: 7px; height: 7px; background: #111; clip-path: polygon(0 35%, 40% 65%, 100% 0, 100% 40%, 40% 100%, 0 70%); }
.lscroll { width: 16px; display: flex; flex-direction: column; background: #e9e7e3; }
.lscroll b { height: 16px; display: grid; place-items: center; background: #d5d2cb; border: 1px solid; border-color: #f5f4f0 #55534f #55534f #f5f4f0; }
.lscroll .tri { background: #111; }
.lthumb { height: 143px; background: #d5d2cb; border: 1px solid; border-color: #f5f4f0 #55534f #55534f #f5f4f0; }
.lscroll span { flex: 1; }
.pdiv { height: 3px; background: #fff; margin-top: 7px; flex: none; }
.zones { padding-top: 9px; }
.zones p { white-space: nowrap; }
.zonegrid { display: grid; grid-template-columns: minmax(0, 1fr) minmax(0, 1fr); column-gap: 9px; margin-top: 1px; }
h3 { display: flex; align-items: center; gap: 8px; height: 21px; white-space: nowrap; }
.drop { height: 63px; border: 1px solid #a3a8b0; background: #fff; padding: 1px; margin-bottom: 1px; }
.chip { width: 100%; height: 18px; display: flex; align-items: center; justify-content: space-between; padding: 0 8px 0 6px; border: 1px solid #f2cd54; border-radius: 2px; background: linear-gradient(#fff, #fdeec2); color: #333; font-size: 10px; }
.update { display: flex; align-items: center; justify-content: space-between; padding-top: 1px; }
.update label { display: flex; align-items: center; gap: 7px; padding-left: 1px; white-space: nowrap; }
.update input { border-color: #9aa0a8; background: #f4f6f9; }
.update button { width: 81px; height: 23px; border: 1px solid #aaa9a5; background: #d5d2cb; color: #8b8985; text-shadow: 1px 1px #fff; }

.status { flex: none; height: 22px; display: flex; align-items: center; background: linear-gradient(#e9ebef, #c3c6cb); border-bottom: 1px solid #8a929e; color: #333; }
.ready { padding: 0 8px; border-right: 1px solid #8f949c; height: 16px; line-height: 16px; }
.views { display: flex; align-items: center; margin-left: auto; }
.views button { width: 19px; height: 18px; display: grid; place-items: center; }
.views .sel { background: #fbdc77; border: 1px solid #cf9f2b; border-radius: 2px; }
.pct { padding: 0 8px 0 10px; }
.status input { appearance: none; width: 102px; height: 14px; background: linear-gradient(#8b93a0, #8b93a0) center / 100% 1px no-repeat; margin: 0 -1px; }
.status input::-webkit-slider-thumb { appearance: none; width: 9px; height: 13px; border: 1px solid #7b818b; background: #fff; border-radius: 1px 1px 5px 5px; }
.grab { align-self: flex-end; margin-left: 7px; }
</style>
